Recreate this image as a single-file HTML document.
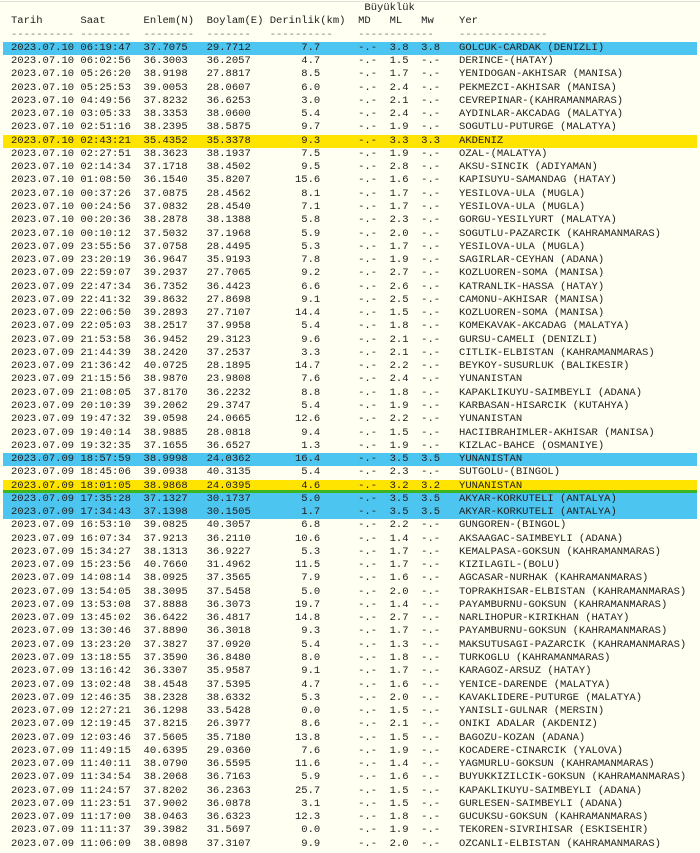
<!DOCTYPE html>
<html><head><meta charset="utf-8"><style>
html,body{margin:0;padding:0;background:#fffff2;width:700px;height:853px;overflow:hidden}
.w{border-top:1px solid #e2e2dc;margin-top:1px;font-family:"Liberation Mono",monospace;font-size:10.53px;line-height:13.28px;color:#1e1e1e;position:relative;top:0px}
.w div{white-space:pre;padding-left:11px;height:13.28px}
.w div.b,.w div.y{margin:0 3px;padding-left:8px}
.b{background:#4cc6f0}
.y{background:#ffe400}
.g{box-shadow:inset 0 -3px 0 #3cb521}
.h{color:#777}
</style></head><body><div class="w">
<div>                                                        Büyüklük</div>
<div>Tarih      Saat      Enlem(N)  Boylam(E) Derinlik(km)  MD   ML   Mw    Yer</div>
<div class="h">---------- --------  --------  -------   ----------    ------------    --------------</div>
<div class="b">2023.07.10 06:19:47  37.7075   29.7712        7.7      -.-  3.8  3.8   GOLCUK-CARDAK (DENIZLI)</div>
<div>2023.07.10 06:02:56  36.3003   36.2057        4.7      -.-  1.5  -.-   DERINCE-(HATAY)</div>
<div>2023.07.10 05:26:20  38.9198   27.8817        8.5      -.-  1.7  -.-   YENIDOGAN-AKHISAR (MANISA)</div>
<div>2023.07.10 05:25:53  39.0053   28.0607        6.0      -.-  2.4  -.-   PEKMEZCI-AKHISAR (MANISA)</div>
<div>2023.07.10 04:49:56  37.8232   36.6253        3.0      -.-  2.1  -.-   CEVREPINAR-(KAHRAMANMARAS)</div>
<div>2023.07.10 03:05:33  38.3353   38.0600        5.4      -.-  2.4  -.-   AYDINLAR-AKCADAG (MALATYA)</div>
<div>2023.07.10 02:51:16  38.2395   38.5875        9.7      -.-  1.9  -.-   SOGUTLU-PUTURGE (MALATYA)</div>
<div class="y">2023.07.10 02:43:21  35.4352   35.3378        9.3      -.-  3.3  3.3   AKDENIZ</div>
<div>2023.07.10 02:27:51  38.3623   38.1937        7.5      -.-  1.9  -.-   OZAL-(MALATYA)</div>
<div>2023.07.10 02:14:34  37.1718   38.4502        9.5      -.-  2.8  -.-   AKSU-SINCIK (ADIYAMAN)</div>
<div>2023.07.10 01:08:50  36.1540   35.8207       15.6      -.-  1.6  -.-   KAPISUYU-SAMANDAG (HATAY)</div>
<div>2023.07.10 00:37:26  37.0875   28.4562        8.1      -.-  1.7  -.-   YESILOVA-ULA (MUGLA)</div>
<div>2023.07.10 00:24:56  37.0832   28.4540        7.1      -.-  1.7  -.-   YESILOVA-ULA (MUGLA)</div>
<div>2023.07.10 00:20:36  38.2878   38.1388        5.8      -.-  2.3  -.-   GORGU-YESILYURT (MALATYA)</div>
<div>2023.07.10 00:10:12  37.5032   37.1968        5.9      -.-  2.0  -.-   SOGUTLU-PAZARCIK (KAHRAMANMARAS)</div>
<div>2023.07.09 23:55:56  37.0758   28.4495        5.3      -.-  1.7  -.-   YESILOVA-ULA (MUGLA)</div>
<div>2023.07.09 23:20:19  36.9647   35.9193        7.8      -.-  1.9  -.-   SAGIRLAR-CEYHAN (ADANA)</div>
<div>2023.07.09 22:59:07  39.2937   27.7065        9.2      -.-  2.7  -.-   KOZLUOREN-SOMA (MANISA)</div>
<div>2023.07.09 22:47:34  36.7352   36.4423        6.6      -.-  2.6  -.-   KATRANLIK-HASSA (HATAY)</div>
<div>2023.07.09 22:41:32  39.8632   27.8698        9.1      -.-  2.5  -.-   CAMONU-AKHISAR (MANISA)</div>
<div>2023.07.09 22:06:50  39.2893   27.7107       14.4      -.-  1.5  -.-   KOZLUOREN-SOMA (MANISA)</div>
<div>2023.07.09 22:05:03  38.2517   37.9958        5.4      -.-  1.8  -.-   KOMEKAVAK-AKCADAG (MALATYA)</div>
<div>2023.07.09 21:53:58  36.9452   29.3123        9.6      -.-  2.1  -.-   GURSU-CAMELI (DENIZLI)</div>
<div>2023.07.09 21:44:39  38.2420   37.2537        3.3      -.-  2.1  -.-   CITLIK-ELBISTAN (KAHRAMANMARAS)</div>
<div>2023.07.09 21:36:42  40.0725   28.1895       14.7      -.-  2.2  -.-   BEYKOY-SUSURLUK (BALIKESIR)</div>
<div>2023.07.09 21:15:56  38.9870   23.9808        7.6      -.-  2.4  -.-   YUNANISTAN</div>
<div>2023.07.09 21:08:05  37.8170   36.2232        8.8      -.-  1.8  -.-   KAPAKLIKUYU-SAIMBEYLI (ADANA)</div>
<div>2023.07.09 20:10:39  39.2062   29.3747        5.4      -.-  1.9  -.-   KARBASAN-HISARCIK (KUTAHYA)</div>
<div>2023.07.09 19:47:32  39.0598   24.0665       12.6      -.-  2.2  -.-   YUNANISTAN</div>
<div>2023.07.09 19:40:14  38.9885   28.0818        9.4      -.-  1.5  -.-   HACIIBRAHIMLER-AKHISAR (MANISA)</div>
<div>2023.07.09 19:32:35  37.1655   36.6527        1.3      -.-  1.9  -.-   KIZLAC-BAHCE (OSMANIYE)</div>
<div class="b">2023.07.09 18:57:59  38.9998   24.0362       16.4      -.-  3.5  3.5   YUNANISTAN</div>
<div>2023.07.09 18:45:06  39.0938   40.3135        5.4      -.-  2.3  -.-   SUTGOLU-(BINGOL)</div>
<div class="y g">2023.07.09 18:01:05  38.9868   24.0395        4.6      -.-  3.2  3.2   YUNANISTAN</div>
<div class="b">2023.07.09 17:35:28  37.1327   30.1737        5.0      -.-  3.5  3.5   AKYAR-KORKUTELI (ANTALYA)</div>
<div class="b">2023.07.09 17:34:43  37.1398   30.1505        1.7      -.-  3.5  3.5   AKYAR-KORKUTELI (ANTALYA)</div>
<div>2023.07.09 16:53:10  39.0825   40.3057        6.8      -.-  2.2  -.-   GUNGOREN-(BINGOL)</div>
<div>2023.07.09 16:07:34  37.9213   36.2110       10.6      -.-  1.4  -.-   AKSAAGAC-SAIMBEYLI (ADANA)</div>
<div>2023.07.09 15:34:27  38.1313   36.9227        5.3      -.-  1.7  -.-   KEMALPASA-GOKSUN (KAHRAMANMARAS)</div>
<div>2023.07.09 15:23:56  40.7660   31.4962       11.5      -.-  1.7  -.-   KIZILAGIL-(BOLU)</div>
<div>2023.07.09 14:08:14  38.0925   37.3565        7.9      -.-  1.6  -.-   AGCASAR-NURHAK (KAHRAMANMARAS)</div>
<div>2023.07.09 13:54:05  38.3095   37.5458        5.0      -.-  2.0  -.-   TOPRAKHISAR-ELBISTAN (KAHRAMANMARAS)</div>
<div>2023.07.09 13:53:08  37.8888   36.3073       19.7      -.-  1.4  -.-   PAYAMBURNU-GOKSUN (KAHRAMANMARAS)</div>
<div>2023.07.09 13:45:02  36.6422   36.4817       14.8      -.-  2.7  -.-   NARLIHOPUR-KIRIKHAN (HATAY)</div>
<div>2023.07.09 13:30:46  37.8890   36.3018        9.3      -.-  1.7  -.-   PAYAMBURNU-GOKSUN (KAHRAMANMARAS)</div>
<div>2023.07.09 13:23:20  37.3827   37.0920        5.4      -.-  1.3  -.-   MAKSUTUSAGI-PAZARCIK (KAHRAMANMARAS)</div>
<div>2023.07.09 13:18:55  37.3590   36.8480        8.0      -.-  1.8  -.-   TURKOGLU (KAHRAMANMARAS)</div>
<div>2023.07.09 13:16:42  36.3307   35.9587        9.1      -.-  1.7  -.-   KARAGOZ-ARSUZ (HATAY)</div>
<div>2023.07.09 13:02:48  38.4548   37.5395        4.7      -.-  1.6  -.-   YENICE-DARENDE (MALATYA)</div>
<div>2023.07.09 12:46:35  38.2328   38.6332        5.3      -.-  2.0  -.-   KAVAKLIDERE-PUTURGE (MALATYA)</div>
<div>2023.07.09 12:27:21  36.1298   33.5428        0.0      -.-  1.5  -.-   YANISLI-GULNAR (MERSIN)</div>
<div>2023.07.09 12:19:45  37.8215   26.3977        8.6      -.-  2.1  -.-   ONIKI ADALAR (AKDENIZ)</div>
<div>2023.07.09 12:03:46  37.5605   35.7180       13.8      -.-  1.5  -.-   BAGOZU-KOZAN (ADANA)</div>
<div>2023.07.09 11:49:15  40.6395   29.0360        7.6      -.-  1.9  -.-   KOCADERE-CINARCIK (YALOVA)</div>
<div>2023.07.09 11:40:11  38.0790   36.5595       11.6      -.-  1.4  -.-   YAGMURLU-GOKSUN (KAHRAMANMARAS)</div>
<div>2023.07.09 11:34:54  38.2068   36.7163        5.9      -.-  1.6  -.-   BUYUKKIZILCIK-GOKSUN (KAHRAMANMARAS)</div>
<div>2023.07.09 11:24:57  37.8202   36.2363       25.7      -.-  1.5  -.-   KAPAKLIKUYU-SAIMBEYLI (ADANA)</div>
<div>2023.07.09 11:23:51  37.9002   36.0878        3.1      -.-  1.5  -.-   GURLESEN-SAIMBEYLI (ADANA)</div>
<div>2023.07.09 11:17:00  38.0463   36.6323       12.3      -.-  1.8  -.-   GUCUKSU-GOKSUN (KAHRAMANMARAS)</div>
<div>2023.07.09 11:11:37  39.3982   31.5697        0.0      -.-  1.9  -.-   TEKOREN-SIVRIHISAR (ESKISEHIR)</div>
<div>2023.07.09 11:06:09  38.0898   37.3107        9.9      -.-  2.0  -.-   OZCANLI-ELBISTAN (KAHRAMANMARAS)</div>
</div></body></html>
